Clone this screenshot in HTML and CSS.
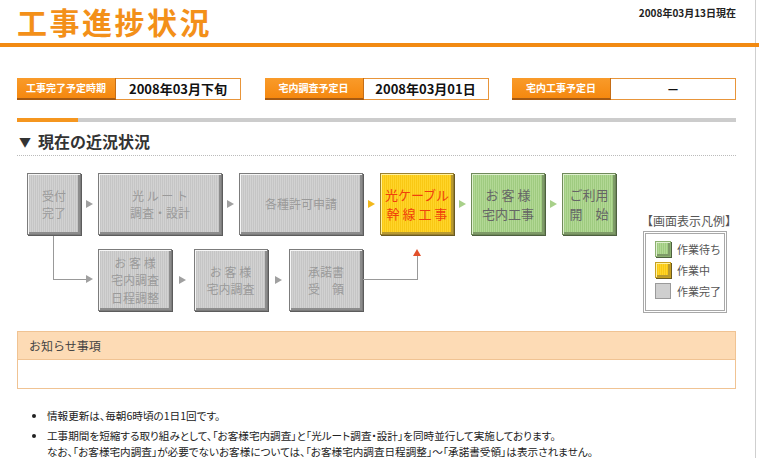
FILE: index.html
```
<!DOCTYPE html>
<html lang="ja">
<head>
<meta charset="utf-8">
<title>工事進捗状況</title>
<link rel="stylesheet" href="styles.css">
</head>
<body>
<div class="top">
	<h1 class="title">工事進捗状況</h1>
	<p class="today">2008年03月13日現在</p>
</div>
<div class="rule"></div>

<div class="content">
	<div class="dates">
		<div class="date"><span class="date-label">工事完了予定時期</span><span class="date-value">2008年03月下旬</span></div>
		<div class="date"><span class="date-label">宅内調査予定日</span><span class="date-value">2008年03月01日</span></div>
		<div class="date"><span class="date-label">宅内工事予定日</span><span class="date-value">－</span></div>
	</div>

	<div class="progress"><span class="progress-done"></span></div>

	<h2 class="section"><span class="mark">▼</span>現在の近況状況</h2>

	<div class="status">
		<div class="flow">
			<div class="flow-row">
				<div class="step done small">受付<br>完了</div>
				<span class="arrow"></span>
				<div class="step done wide">光 ル ー ト<br>調査・設計</div>
				<span class="arrow"></span>
				<div class="step done wide">各種許可申請</div>
				<span class="arrow arrow-now"></span>
				<div class="step now mid">光ケーブル<br>幹 線 工 事</div>
				<span class="arrow arrow-wait"></span>
				<div class="step wait mid">お 客 様<br>宅内工事</div>
				<span class="arrow arrow-wait"></span>
				<div class="step wait small">ご利用<br>開　始</div>
			</div>
			<div class="flow-row row2">
				<div class="step done mid">お 客 様<br>宅内調査<br>日程調整</div>
				<span class="arrow"></span>
				<div class="step done mid">お 客 様<br>宅内調査</div>
				<span class="arrow"></span>
				<div class="step done mid">承諾書<br>受　領</div>
			</div>
			<span class="line line-down"></span>
			<span class="line line-in"></span>
			<span class="head head-in"></span>
			<span class="line line-out"></span>
			<span class="line line-up"></span>
			<span class="head head-up"></span>
		</div>

		<div class="legend">
			<p class="legend-title">【画面表示凡例】</p>
			<ul class="legend-box">
				<li><span class="swatch wait"></span>作業待ち</li>
				<li><span class="swatch now"></span>作業中</li>
				<li><span class="swatch done"></span>作業完了</li>
			</ul>
		</div>
	</div>

	<div class="notice">
		<div class="notice-head">お知らせ事項</div>
		<div class="notice-body"></div>
	</div>

	<ul class="notes">
		<li>情報更新は、毎朝6時頃の1日1回です。</li>
		<li>工事期間を短縮する取り組みとして、「お客様宅内調査」と「光ルート調査・設計」を同時並行して実施しております。<br>なお、「お客様宅内調査」が必要でないお客様については、「お客様宅内調査日程調整」～「承諾書受領」は表示されません。</li>
	</ul>
</div>
</body>
</html>
```
FILE: styles.css
```
html
{
background: #fff linear-gradient(#cfcfcf, #cfcfcf) 755px 0 / 1px 100% no-repeat;
}

body
{
margin: 0;
font-family: "Noto Sans CJK JP", sans-serif;
color: #333;
}

/* header */
.top
{
height: 43px;
display: flex;
justify-content: space-between;
padding: 0 23px 0 17px;
}
.title
{
margin: 0;
font-size: 30px;
line-height: 43px;
height: 43px;
letter-spacing: 2.5px;
color: #f39019;
font-weight: bold;
}
.today
{
margin: 5px 0 0;
font-size: 10px;
line-height: 15px;
font-weight: bold;
color: #222;
}
.rule
{
height: 4px;
background-color: #f28a12;
}

.content
{
padding: 0 23px 0 17px;
}

/* dates */
.dates
{
margin-top: 31px;
display: flex;
justify-content: space-between;
}
.date
{
display: flex;
height: 22px;
width: 224px;
}
.date-label
{
width: 99px;
box-sizing: border-box;
background: linear-gradient(#f99b2a, #f5880f);
border-bottom: 2px solid #a65a12;
border-right: 1px solid #c56d16;
color: #fff;
font-size: 10px;
font-weight: bold;
line-height: 20px;
text-align: center;
}
.date-value
{
flex: 1;
box-sizing: border-box;
border: 1px solid #e8953a;
border-left: 0;
font-size: 13px;
font-weight: bold;
line-height: 20px;
text-align: center;
color: #111;
}

.progress
{
margin-top: 18px;
height: 4px;
background-color: #cccccc;
}
.progress-done
{
display: block;
width: 61px;
height: 4px;
background-color: #f5961f;
}

.section
{
margin: 8px 0 0;
font-size: 16px;
line-height: 22px;
color: #333;
padding-bottom: 1px;
border-bottom: 1px dotted #bbb;
}
.mark
{
font-size: 12px;
margin: 0 7px 0 2px;
position: relative;
top: -1px;
}

/* flow */
.status
{
display: flex;
margin-top: 17px;
height: 138px;
}
.flow
{
position: relative;
margin-left: 10px;
width: 600px;
}
.flow-row
{
display: flex;
height: 62px;
}
.row2
{
margin: 14px 0 0 71px;
}
.step
{
box-sizing: border-box;
display: flex;
align-items: center;
justify-content: center;
text-align: center;
font-size: 12px;
line-height: 17.5px;
color: #9a9a9a;
border: 1px solid #7c7c7c;
box-shadow: inset 1px 1px 0 #f6f6f6, inset -2px -2px 0 #8c8c8c, 1px 1px 0 #5c5c5c;
}
.small { width: 54px; }
.mid { width: 74px; }
.wide { width: 124px; }
.done
{
background: repeating-linear-gradient(90deg, #d2d2d2 0 1px, #c5c5c5 1px 2px);
}
.now
{
color: #f0400c;
font-size: 13px;
line-height: 19px;
background: repeating-linear-gradient(90deg, #ffd52a 0 1px, #f9c814 1px 2px);
border-color: #9a8030;
box-shadow: inset 1px 1px 0 #fff2a0, inset -2px -2px 0 #b89a30, 1px 1px 0 #6a5a20;
}
.wait
{
color: #666;
font-size: 13px;
line-height: 19px;
background: repeating-linear-gradient(90deg, #b2d895 0 1px, #9fcb80 1px 2px);
border-color: #6f8a5a;
box-shadow: inset 1px 1px 0 #e0f0d0, inset -2px -2px 0 #7e9a68, 1px 1px 0 #4e6040;
}
.arrow
{
width: 17px;
display: flex;
align-items: center;
justify-content: center;
}
.row2 .arrow { width: 21.5px; }
.arrow::before
{
content: "";
border-left: 7px solid #a0a0a0;
border-top: 4px solid transparent;
border-bottom: 4px solid transparent;
}
.arrow-now::before { border-left-color: #f2b81c; }
.arrow-wait::before { border-left-color: #a8d08a; }

.line
{
position: absolute;
background-color: #999;
}
.line-down { left: 26px; top: 63px; width: 1px; height: 43px; }
.line-in { left: 26px; top: 106px; width: 34px; height: 1px; }
.line-out { left: 336px; top: 106px; width: 55px; height: 1px; }
.line-up { left: 390px; top: 82px; width: 1px; height: 25px; }
.head
{
position: absolute;
width: 0;
height: 0;
}
.head-in
{
left: 59px;
top: 102px;
border-left: 7px solid #a0a0a0;
border-top: 4px solid transparent;
border-bottom: 4px solid transparent;
}
.head-up
{
left: 386px;
top: 76px;
border-bottom: 7px solid #e2502a;
border-left: 4px solid transparent;
border-right: 4px solid transparent;
}

/* legend */
.legend
{
margin: 39px 9px 0 auto;
width: 84px;
}
.legend-title
{
margin: 0 0 2px -2px;
font-size: 12px;
line-height: 17px;
color: #555;
white-space: nowrap;
}
.legend-box
{
margin: 0;
list-style: none;
border: 3px double #a8a8a8;
padding: 7px 0 7px 9px;
height: 62px;
display: flex;
flex-direction: column;
gap: 5px;
}
.legend-box li
{
display: flex;
align-items: center;
height: 16px;
font-size: 11px;
color: #555;
}
.swatch
{
width: 14px;
height: 14px;
margin-right: 6px;
border: 1px solid #9a9a9a;
}
.swatch.wait { border-color: #8cb070; }
.swatch.now { border-color: #c8a020; }
.swatch.done { background: #cfcfcf; }

/* notice */
.notice
{
margin-top: 20px;
border: 1px solid #f0c393;
}
.notice-head
{
height: 27px;
background-color: #fddbb5;
border-bottom: 1px solid #f0c393;
padding-left: 11px;
font-size: 12px;
line-height: 27px;
color: #444;
}
.notice-body
{
height: 28px;
}

.notes
{
margin: 19px 0 0;
padding-left: 30px;
font-size: 10.6px;
line-height: 16px;
color: #222;
font-feature-settings: "palt";
}
.notes li
{
margin-bottom: 4px;
}
```
